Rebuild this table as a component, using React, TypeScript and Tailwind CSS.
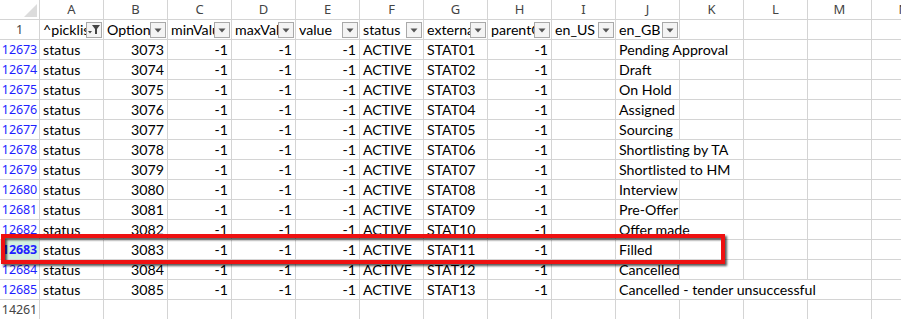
import React from "react";

const LETTERS = ["A", "B", "C", "D", "E", "F", "G", "H", "I", "J", "K", "L", "M", "N"];

type Row = { n: string; num: string; stat: string; label: string; span: number };

const rows: Row[] = [
  { n: "12673", num: "3073", stat: "STAT01", label: "Pending Approval", span: 1 },
  { n: "12674", num: "3074", stat: "STAT02", label: "Draft", span: 0 },
  { n: "12675", num: "3075", stat: "STAT03", label: "On Hold", span: 0 },
  { n: "12676", num: "3076", stat: "STAT04", label: "Assigned", span: 0 },
  { n: "12677", num: "3077", stat: "STAT05", label: "Sourcing", span: 0 },
  { n: "12678", num: "3078", stat: "STAT06", label: "Shortlisting by TA", span: 1 },
  { n: "12679", num: "3079", stat: "STAT07", label: "Shortlisted to HM", span: 1 },
  { n: "12680", num: "3080", stat: "STAT08", label: "Interview", span: 0 },
  { n: "12681", num: "3081", stat: "STAT09", label: "Pre-Offer", span: 0 },
  { n: "12682", num: "3082", stat: "STAT10", label: "Offer made", span: 1 },
  { n: "12683", num: "3083", stat: "STAT11", label: "Filled", span: 0 },
  { n: "12684", num: "3084", stat: "STAT12", label: "Cancelled", span: 0 },
  { n: "12685", num: "3085", stat: "STAT13", label: "Cancelled - tender unsuccessful", span: 3 },
];

const cellFont = { fontFamily: "Lato, 'Noto Sans', sans-serif" };
const hdrFont = { fontFamily: "'Noto Sans', 'Open Sans', sans-serif" };

function Caret() {
  return (
    <svg width="8" height="5" viewBox="0 0 8 5">
      <path d="M0.5 0.5 L7.5 0.5 L4 4.5 Z" fill="#555" />
    </svg>
  );
}

function Funnel() {
  return (
    <svg width="14" height="12" viewBox="0 0 14 12">
      <path d="M5 1 L13 1 L10 5 L10 10 L8 10 L8 5 Z" fill="#444" />
      <path d="M1 7 L5 7 L3 9.5 Z" fill="#444" />
    </svg>
  );
}

function FilterBtn({ funnel }: { funnel?: boolean }) {
  return (
    <div className="absolute right-[1px] top-[2px] w-[16px] h-[16px] border border-[#a9a9a9] bg-[#f4f4f4] flex items-center justify-center">
      {funnel ? <Funnel /> : <Caret />}
    </div>
  );
}

function Cell({
  children,
  align = "left",
  w = 64,
  filter,
  funnel,
}: {
  children?: React.ReactNode;
  align?: "left" | "right";
  w?: number;
  filter?: boolean;
  funnel?: boolean;
}) {
  return (
    <div
      className={
        "relative shrink-0 h-[20px] border-r border-b border-[#d4d4d4] overflow-hidden whitespace-nowrap text-[14.2px] leading-[20px] text-black px-[3px] " +
        (align === "right" ? "text-right" : "text-left")
      }
      style={{ ...cellFont, width: w }}
    >
      <span className={filter ? "block overflow-hidden pr-[15px]" : ""}>{children}</span>
      {filter ? <FilterBtn funnel={funnel} /> : null}
    </div>
  );
}

function RowHeader({
  children,
  color = "text-[#1e1eff]",
  selected,
}: {
  children?: React.ReactNode;
  color?: string;
  selected?: boolean;
}) {
  return (
    <div
      className={
        "shrink-0 w-[40px] h-[20px] border-r border-b border-[#d4d4d4] text-center text-[12.5px] leading-[19px] tracking-[-0.1px] " +
        color +
        (selected ? " bg-[#d3f0e0] font-bold" : " bg-white")
      }
      style={hdrFont}
    >
      {children}
    </div>
  );
}

export default function App() {
  return (
    <div className="relative w-[901px] h-[319px] overflow-hidden bg-white">
      {/* column headers */}
      <div className="flex h-[20px]">
        <div className="relative shrink-0 w-[40px] h-[20px] border-r border-b border-[#d4d4d4]">
          <svg className="absolute left-[24px] top-[4px]" width="13" height="13" viewBox="0 0 13 13">
            <path d="M13 0 L13 13 L0 13 Z" fill="#dcdcdc" />
          </svg>
        </div>
        {LETTERS.map((l) => (
          <div
            key={l}
            className="shrink-0 w-[64px] h-[20px] border-r border-b border-[#d4d4d4] text-center text-[13px] leading-[19px] text-[#444]"
            style={hdrFont}
          >
            {l}
          </div>
        ))}
      </div>

      {/* row 1 */}
      <div className="flex h-[20px]">
        <RowHeader color="text-[#444]">1</RowHeader>
        <Cell filter funnel>^picklistId</Cell>
        <Cell filter>OptionId</Cell>
        <Cell filter>minValue</Cell>
        <Cell filter>maxValue</Cell>
        <Cell filter>value</Cell>
        <Cell filter>status</Cell>
        <Cell filter>externalCode</Cell>
        <Cell filter>parentOptionId</Cell>
        <Cell filter>en_US</Cell>
        <Cell filter>en_GB</Cell>
        <Cell />
        <Cell />
        <Cell />
        <Cell />
      </div>

      {rows.map((r) => (
        <div key={r.n} className="flex h-[20px]">
          <RowHeader selected={r.n === "12683"}>{r.n}</RowHeader>
          <Cell>status</Cell>
          <Cell align="right">{r.num}</Cell>
          <Cell align="right">-1</Cell>
          <Cell align="right">-1</Cell>
          <Cell align="right">-1</Cell>
          <Cell>ACTIVE</Cell>
          <Cell>{r.stat}</Cell>
          <Cell align="right">-1</Cell>
          <Cell />
          <Cell w={64 * (1 + r.span)}>{r.label}</Cell>
          {r.span < 1 ? <Cell /> : null}
          {r.span < 2 ? <Cell /> : null}
          {r.span < 3 ? <Cell /> : null}
          <Cell />
        </div>
      ))}

      <div className="flex h-[20px]">
        <RowHeader color="text-[#444]">14261</RowHeader>
        {LETTERS.map((l) => (
          <Cell key={l} />
        ))}
      </div>

      {/* red highlight box */}
      <div className="absolute left-[1px] top-[234px] w-[724px] h-[30px] border-[4px] border-[#ee1111] drop-shadow-[2px_2px_1px_rgba(0,0,0,0.65)]" />
    </div>
  );
}
